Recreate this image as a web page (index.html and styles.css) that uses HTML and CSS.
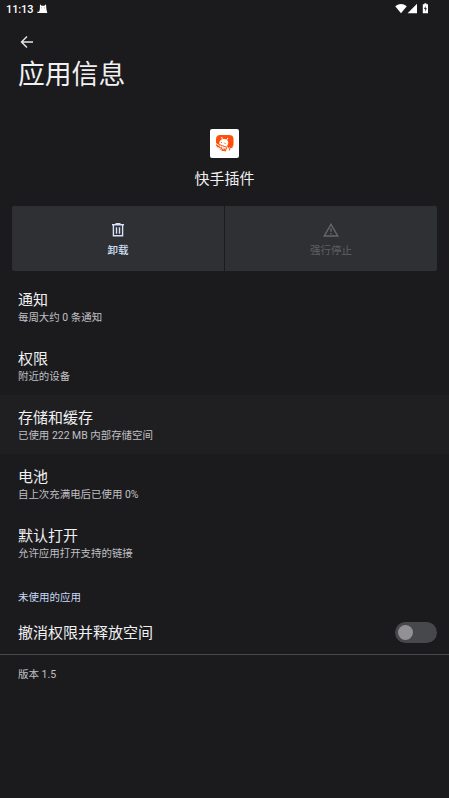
FILE: index.html
```html
<!DOCTYPE html>
<html lang="zh-CN">
<head>
<meta charset="utf-8">
<title>应用信息</title>
<link rel="stylesheet" href="styles.css">
</head>
<body>
<header class="status">
  <span class="clock">11:13</span>
  <svg class="cat" width="11" height="10" viewBox="0 0 11 10"><path fill="#fff" d="M3 .3 4.600 1.800h2.800L9 .3l.4 5L10.300 9H.4V7.500L2 8l.8-2.500z"/><path fill="#777" d="M4.300 3.500h.8v.8h-.8zM7 3.500h.8v.8H7z"/></svg>
  <svg class="signals" width="36" height="11" viewBox="0 0 36 11"><path fill="#fff" d="M.2 3.200Q6 -1.400 11.800 3.200L6 10.200zM22 .8v9.400h-9.400z"/><path fill="#fff" d="M27.800 1.300h1.600V.2h2v1.100H33v9h-5.200z"/><path fill="#1b1b1d" d="M30.600 3 29 6h1.200v2.500L31.900 5.300h-1.300z"/></svg>
</header>
<nav class="toolbar">
  <svg width="14" height="14" viewBox="0 0 14 14" fill="none" stroke="#e8e8ea" stroke-width="1.400"><path d="M13 7H2M7 1.500 1.500 7 7 12.500"/></svg>
</nav>
<h1>应用信息</h1>
<section class="app">
  <div class="app-icon">
    <svg width="29" height="29" viewBox="0 0 29 29"><path fill="#ff4f0a" d="M10 6h9q4.500 0 4.500 4v5.500q0 2.500-2.500 2.500h-5l-1 4h-2.500Q7 19 6 16v-5.500Q6 6 10 6z"/><path fill="#fff" d="M9.300 13.500q1.200-3.800 4.700-3.500 4 .2 4.300 4l-1.300 5-3.500 1.500-4-3z"/><path fill="none" stroke="#fff" d="m11.500 8 1.200 2.500M18 9l-1.500 2M6 14.500l3 2M8 18.500l3.500 2"/><path fill="none" stroke="#ff4f0a" d="m11 13.300 1 .3M14.500 14.300l1 .3M9 15.500l7 2.500M17.500 16.500l-2.300 6M18 18.500l2 .6-.7 2.400M20 18.500h2.500M11 18l1 .6M13.500 19l1 .5"/></svg>
  </div>
  <div class="app-name">快手插件</div>
</section>
<section class="actions">
  <div class="action">
    <svg width="16" height="16" viewBox="0 0 16 16" fill="none" stroke="#d5e1fa" stroke-width="1.400"><path d="M2 2.700h12M5.500 1.700h5M3.400 3v10.800h9.200V3M6.500 5.300v6.400M9.500 5.300v6.400"/></svg>
    <span>卸载</span>
  </div>
  <div class="action disabled">
    <svg width="16" height="16" viewBox="0 0 16 16" fill="none" stroke="#66676a" stroke-width="1.400"><path d="M8 2.300 14.800 14H1.200zM8 6.300v3.400M8 10.900v1.500"/></svg>
    <span>强行停止</span>
  </div>
</section>
<main>
  <div class="row"><div class="title">通知</div><div class="summary">每周大约 0 条通知</div></div>
  <div class="row"><div class="title">权限</div><div class="summary">附近的设备</div></div>
  <div class="row pressed"><div class="title">存储和缓存</div><div class="summary">已使用 222 MB 内部存储空间</div></div>
  <div class="row"><div class="title">电池</div><div class="summary">自上次充满电后已使用 0%</div></div>
  <div class="row"><div class="title">默认打开</div><div class="summary">允许应用打开支持的链接</div></div>
  <h2>未使用的应用</h2>
  <div class="toggle-row"><div class="title">撤消权限并释放空间</div><div class="switch"><i></i></div></div>
</main>
<footer>版本 1.5</footer>
</body>
</html>
```
FILE: styles.css
```css
* { box-sizing: border-box; }
body {
  margin: 0;
  height: 798px;
  overflow: hidden;
  background: #1b1b1d;
  color: #f0f0f2;
  font-family: Roboto, "Noto Sans CJK SC", sans-serif;
}
svg { display: block; flex: none; }
.status { display: flex; height: 18px; padding: 3px 18px 0 6px; }
.clock { font-size: 11px; line-height: 13px; font-weight: 500; letter-spacing: -.1px; width: 31px; color: #fff; }
.cat { margin-top: 1px; }
.signals { margin-left: auto; }
.toolbar { height: 36px; padding: 17px 0 0 20px; }
h1 { margin: 0; height: 75px; padding: 1px 0 0 18px; font-size: 26.8px; line-height: 40px; font-weight: 400; }
.app { display: flex; flex-direction: column; align-items: center; height: 77px; }
.app-icon { width: 29px; height: 29px; background: #fff; border-radius: 2px; }
.app-name { margin-top: 10px; font-size: 15px; line-height: 22px; }
.actions { display: flex; gap: 1px; height: 65px; margin: 0 12px; }
.action {
  flex: 1;
  display: flex;
  flex-direction: column;
  align-items: center;
  padding-top: 16px;
  background: #2f3034;
  color: #d5e1fa;
  font-size: 10.5px;
  line-height: 16px;
  font-weight: 500;
}
.action:first-child { border-radius: 2px 0 0 2px; }
.action:last-child { border-radius: 0 2px 2px 0; }
.action span { margin-top: 5px; }
.disabled { color: #5f6063; font-weight: 400; }
main { padding-top: 6px; border-bottom: 1px solid #48484a; height: 384px; }
.row { height: 59px; padding: 12px 18px 0; }
.pressed { background: #1f1f21; }
.title { font-size: 15px; line-height: 22px; }
.summary { font-size: 10.45px; line-height: 14px; color: #c0c0c5; }
h2 { margin: 18px 0 0 18px; font-size: 10.5px; line-height: 16px; font-weight: 400; color: #c9d8f4; }
.toggle-row { display: flex; justify-content: space-between; align-items: center; height: 53px; padding: 0 12px 0 18px; }
.toggle-row .title { padding-top: 1px; }
.switch { width: 42px; height: 21px; padding: 3px; border-radius: 11px; background: #47484b; }
.switch i { display: block; width: 15px; height: 15px; border-radius: 50%; background: #929096; }
footer { padding: 12px 18px; font-size: 10.5px; line-height: 16px; color: #c0c0c5; }
```
